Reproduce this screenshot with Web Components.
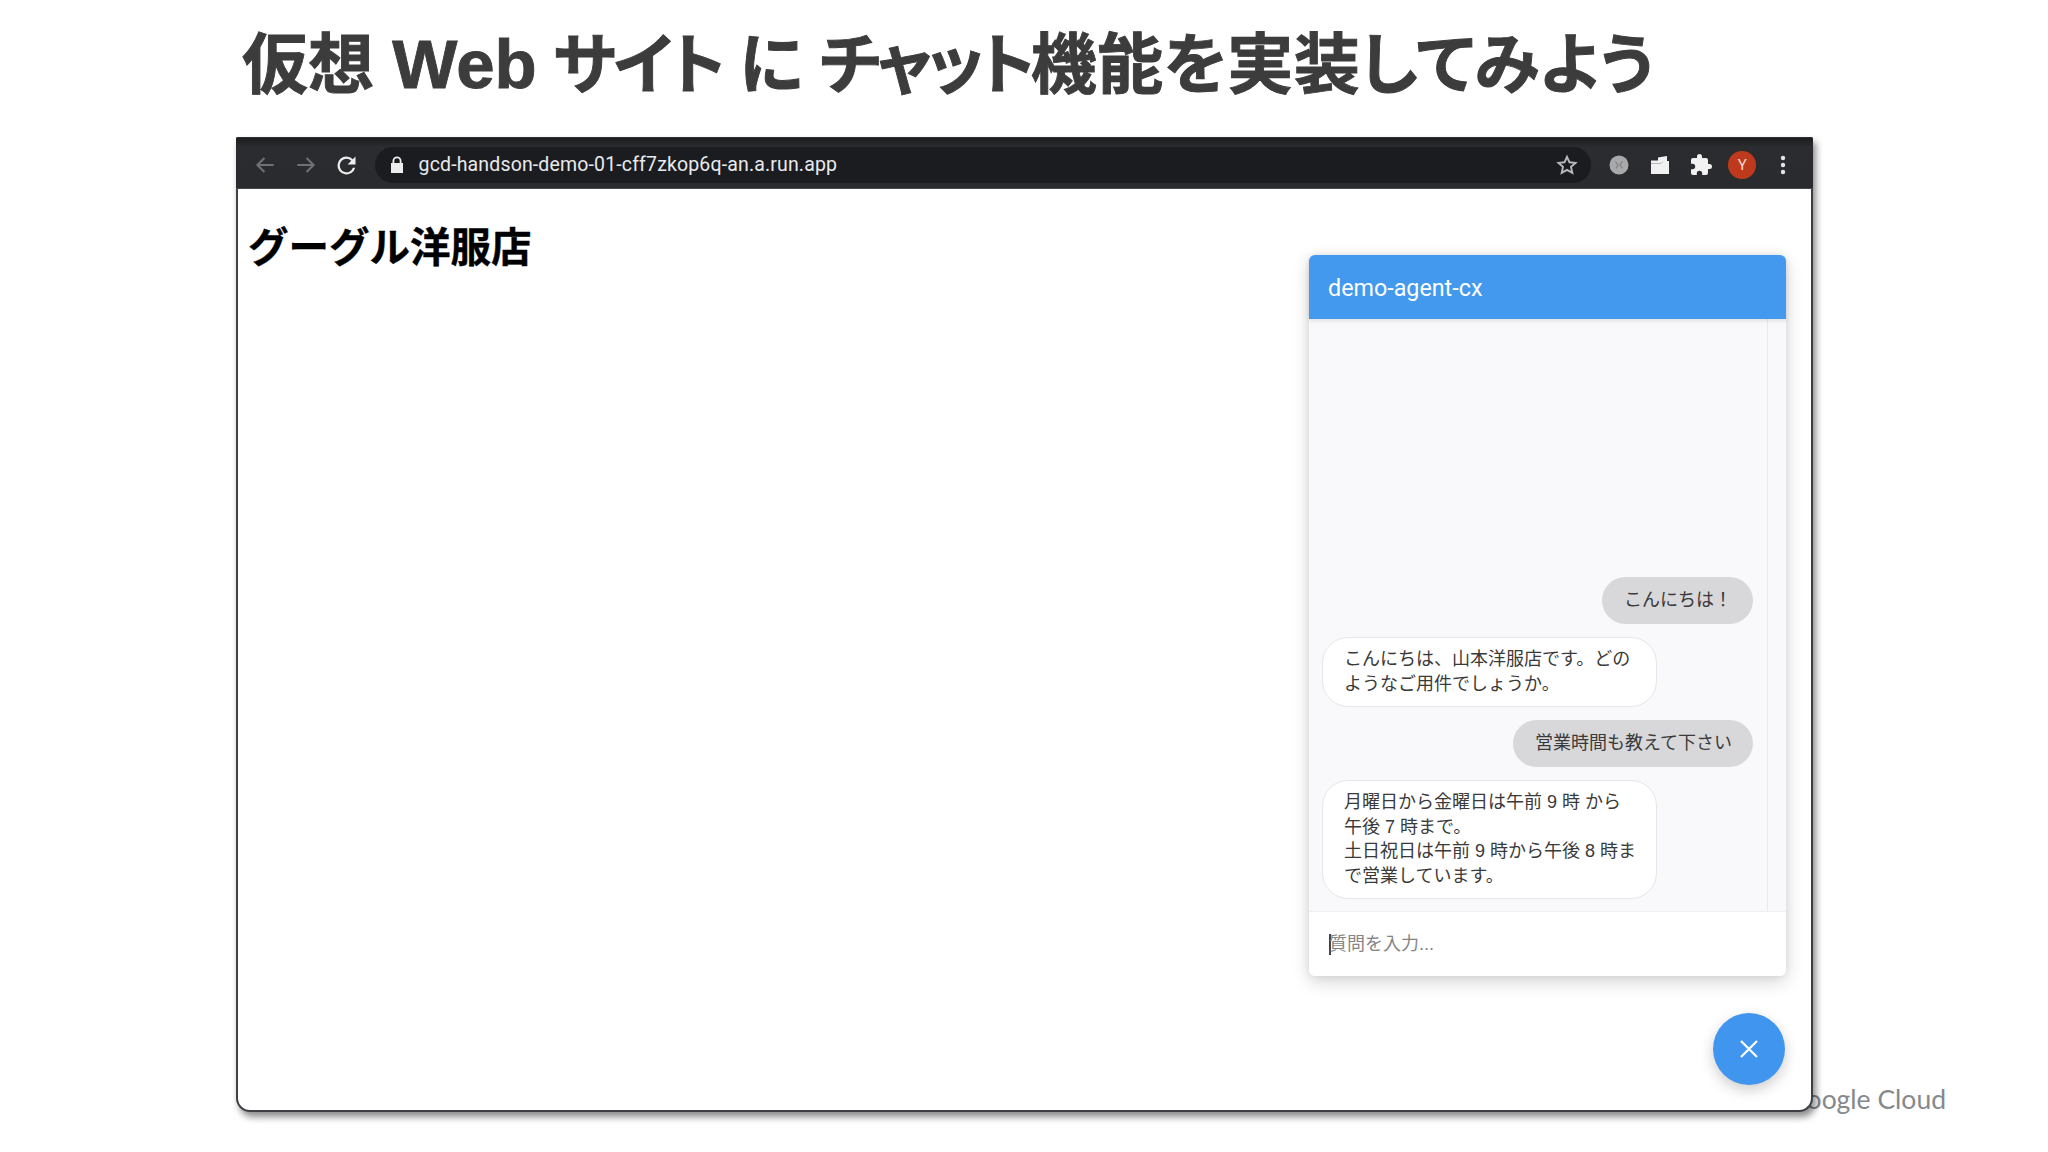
<!DOCTYPE html>
<html lang="ja">
<head>
<meta charset="utf-8">
<title>仮想 Web サイトにチャット機能を実装してみよう</title>
<style>
    html, body { margin: 0; background: #fff; }
    body { font-family: "Liberation Sans", "Noto Sans CJK JP", sans-serif; }
    .web { font-size: 69px; margin-left: 2px; }
    .tight { letter-spacing: -2.6px; }
    .tighter { letter-spacing: -4.2px; }
    .rest { letter-spacing: .4px; }
</style>
</head>
<body>
<slide-page>
    <span slot="title">仮想 <span class="web">Web</span> <span class="tight">サイト</span> に <span class="tighter">チャット</span><span class="rest">機能を実装してみよう</span></span>
    <browser-window url="gcd-handson-demo-01-cff7zkop6q-an.a.run.app">
        <h1 style="margin:0;font:700 40.5px/48px 'Liberation Sans','Noto Sans CJK JP',sans-serif;color:#000;-webkit-text-stroke:.4px #000;">グーグル洋服店</h1>
        <chat-widget slot="overlay" heading="demo-agent-cx" placeholder="質問を入力...">
            <chat-bubble from="user">こんにちは！</chat-bubble>
            <chat-bubble from="bot">こんにちは、山本洋服店です。どのようなご用件でしょうか。</chat-bubble>
            <chat-bubble from="user">営業時間も教えて下さい</chat-bubble>
            <chat-bubble from="bot">月曜日から金曜日は午前 9 時 から<br>午後 7 時まで。<br>土日祝日は午前 9 時から午後 8 時まで営業しています。</chat-bubble>
        </chat-widget>
        <fab-button slot="overlay"></fab-button>
    </browser-window>
</slide-page>

<script>
class SlidePage extends HTMLElement {
    constructor() {
        super();
        this.attachShadow({ mode: 'open' }).innerHTML = `
            <style>
                :host { display: block; position: relative; width: 2048px; height: 1152px; overflow: hidden; background: #fff; }
                .title {
                    height: 124px;
                    padding: 3px 0 10px 242px;
                    font: 700 66px/124px "Liberation Sans", "Noto Sans CJK JP", sans-serif;
                    font-feature-settings: "palt";
                    -webkit-text-stroke: .9px #3c3c3c;
                    word-spacing: -2px;
                    color: #3c3c3c;
                    white-space: nowrap;
                }
                .logo {
                    position: absolute;
                    right: 102px;
                    top: 1082px;
                    font: 400 26.500px/34px Lato, sans-serif;
                    color: #85898d;
                }
                .main { position: relative; padding-left: 236px; }
            </style>
            <div class="title"><slot name="title"></slot></div>
            <div class="logo">Google Cloud</div>
            <div class="main"><slot></slot></div>
        `;
    }
}

class BrowserWindow extends HTMLElement {
    constructor() {
        super();
        const url = this.getAttribute('url');
        this.attachShadow({ mode: 'open' }).innerHTML = `
            <style>
                :host {
                    display: block;
                    position: relative;
                    box-sizing: border-box;
                    width: 1577px;
                    height: 975px;
                    background: #fff;
                    border: solid #3f4043;
                    border-width: 0 2px 2px 2px;
                    border-radius: 2px 2px 14px 14px;
                    box-shadow: 3px 5px 7px rgba(0,0,0,.45);
                }
                .page { padding: 35px 10px; }
            </style>
            <browser-toolbar url="${url}"></browser-toolbar>
            <div class="page"><slot></slot></div>
            <slot name="overlay"></slot>
        `;
    }
}

class BrowserToolbar extends HTMLElement {
    constructor() {
        super();
        const url = this.getAttribute('url');
        this.attachShadow({ mode: 'open' }).innerHTML = `
            <style>
                :host {
                    display: flex;
                    align-items: center;
                    height: 52px;
                    margin: 0 -2px;
                    padding: 4px 9px 0 8px;
                    box-sizing: border-box;
                    background: linear-gradient(#1c1d1f 0, #2b2c2f 9px, #2a2b2e 100%);
                    border-top: 1px solid #2d2e30;
                    border-bottom: 1px solid #46474a;
                    border-radius: 2px 2px 0 0;
                }
                .btn { flex: 0 0 41.2px; height: 32px; display: flex; align-items: center; justify-content: center; }
                .omni {
                    flex: 1;
                    height: 36px;
                    margin: 0 7px 0 7px;
                    padding: 0 12px 0 13px;
                    box-sizing: border-box;
                    display: flex;
                    align-items: center;
                    background: #1b1c1f;
                    border-radius: 18px;
                    color: #e8eaed;
                    font: 400 19.500px/36px Roboto, sans-serif;
                    letter-spacing: .15px;
                }
                .omni .url { margin-left: 13px; flex: 1; }
                svg { display: block; }
                .avatar {
                    width: 28px; height: 28px; border-radius: 50%; background: #bf3a1d; color: #f4d8d0;
                    font: 400 15px/28px Roboto, sans-serif; text-align: center;
                }
            </style>
            <div class="btn"><svg width="26" height="26" viewBox="0 0 24 24" fill="none" stroke="#6f7073" stroke-width="2"><path d="M20 12H5M11.5 5.5 5 12l6.5 6.5"/></svg></div>
            <div class="btn"><svg width="26" height="26" viewBox="0 0 24 24" fill="none" stroke="#6f7073" stroke-width="2"><path d="M4 12h15M12.500 5.500 19 12l-6.500 6.500"/></svg></div>
            <div class="btn"><svg width="27" height="27" viewBox="0 0 24 24" fill="#eceded"><path d="M17.650 6.350A7.960 7.960 0 0 0 12 4a8 8 0 1 0 7.730 10h-2.080A6 6 0 1 1 12 6c1.660 0 3.140.69 4.220 1.780L13 11h7V4z"/></svg></div>
            <div class="omni">
                <svg width="18" height="20" viewBox="0 0 18 20" fill="#eceded"><path d="M4.500 8V6a4.500 4.500 0 0 1 9 0v2H15v10H3V8zM6.300 8h5.400V6a2.700 2.700 0 0 0-5.400 0z"/></svg>
                <span class="url">${url}</span>
                <svg width="24" height="24" viewBox="0 0 24 24" fill="none" stroke="#b9babc" stroke-width="1.900"><path d="m12 3.800 2.500 5.500 6 .6-4.500 4 1.300 5.900L12 16.800l-5.300 3 1.300-5.900-4.500-4 6-.6z"/></svg>
            </div>
            <div class="btn"><svg width="20" height="20" viewBox="0 0 20 20"><circle cx="10" cy="10" r="9.500" fill="#a9a9ab"/><path d="M6.500 6.500 9 10l-2 3.500M13.500 6 11 10l2.500 3.500" stroke="#808183" stroke-width="1.200" fill="none"/></svg></div>
            <div class="btn"><svg width="20" height="20" viewBox="0 0 20 20" fill="#f1f1f2"><path d="M1 5.500h7V2.500l9-1.500V6h2v13H1z"/><path d="M1 8.500h10l2-2" fill="none" stroke="#a9aaac" stroke-width=".8"/></svg></div>
            <div class="btn"><svg width="24" height="24" viewBox="0 0 24 24" fill="#f1f1f2"><path d="M20.500 11H19V7a2 2 0 0 0-2-2h-4V3.500a2.500 2.500 0 0 0-5 0V5H4a2 2 0 0 0-2 2v3.800h1.500a2.700 2.700 0 0 1 0 5.400H2V20a2 2 0 0 0 2 2h3.800v-1.500a2.700 2.700 0 0 1 5.400 0V22H17a2 2 0 0 0 2-2v-4h1.500a2.500 2.500 0 0 0 0-5z"/></svg></div>
            <div class="btn"><div class="avatar">Y</div></div>
            <div class="btn"><svg width="6" height="22" viewBox="0 0 6 22" fill="#e4e4e5"><circle cx="3" cy="4" r="2.200"/><circle cx="3" cy="11" r="2.200"/><circle cx="3" cy="18" r="2.200"/></svg></div>
        `;
    }
}

class ChatWidget extends HTMLElement {
    constructor() {
        super();
        this.attachShadow({ mode: 'open' }).innerHTML = `
            <style>
                :host {
                    display: flex;
                    flex-direction: column;
                    position: absolute;
                    left: 1071px;
                    top: 118px;
                    width: 477px;
                    height: 721px;
                    background: #f9f9fb;
                    border-radius: 6px;
                    box-shadow: 0 6px 18px rgba(0,0,0,.16), 0 0 8px rgba(0,0,0,.08);
                }
                header {
                    height: 64px;
                    flex: none;
                    padding-left: 19px;
                    background: #4299ee;
                    border-radius: 6px 6px 0 0;
                    color: #fff;
                    font: 400 23.300px/66px Roboto, sans-serif;
                    box-shadow: 0 2px 4px rgba(0,0,0,.1);
                    position: relative;
                }
                .body { flex: 1; display: flex; min-height: 0; }
                .messages {
                    flex: 1;
                    display: flex;
                    flex-direction: column;
                    justify-content: flex-end;
                    gap: 12.500px;
                    padding: 0 14px 12px 13px;
                }
                .track { flex: 0 0 18px; border-left: 1px solid #e9e9ec; }
                .input {
                    flex: none;
                    height: 65px;
                    background: #fff;
                    border-top: 1px solid #f0f0f2;
                    box-sizing: border-box;
                    border-radius: 0 0 6px 6px;
                    padding-left: 20px;
                    display: flex;
                    align-items: center;
                    font: 400 18px/24px "Liberation Sans", "Noto Sans CJK JP", sans-serif;
                    color: #858585;
                }
                .caret { width: 1.500px; height: 21px; background: #444; margin-right: -1.500px; }
            </style>
            <header>${this.getAttribute('heading')}</header>
            <div class="body">
                <div class="messages"><slot></slot></div>
                <div class="track"></div>
            </div>
            <div class="input"><span class="caret"></span><span>${this.getAttribute('placeholder')}</span></div>
        `;
    }
}

class ChatBubble extends HTMLElement {
    constructor() {
        super();
        this.attachShadow({ mode: 'open' }).innerHTML = `
            <style>
                :host {
                    display: block;
                    box-sizing: border-box;
                    font: 400 18px/24.600px "Liberation Sans", "Noto Sans CJK JP", sans-serif;
                    color: #3a3a3a;
                }
                :host([from="user"]) {
                    align-self: flex-end;
                    padding: 11.500px 21px 11.500px 22px;
                    background: #d8d8da;
                    border-radius: 24px;
                }
                :host([from="bot"]) {
                    align-self: flex-start;
                    width: 335px;
                    padding: 9.500px 15px 9.500px 21px;
                    background: #fff;
                    border: 1px solid #e6e6e8;
                    border-radius: 26px;
                }
            </style>
            <slot></slot>
        `;
    }
}

class FabButton extends HTMLElement {
    constructor() {
        super();
        this.attachShadow({ mode: 'open' }).innerHTML = `
            <style>
                :host {
                    display: flex;
                    align-items: center;
                    justify-content: center;
                    position: absolute;
                    left: 1475px;
                    top: 876px;
                    width: 72px;
                    height: 72px;
                    border-radius: 50%;
                    background: #4096ee;
                    box-shadow: 0 5px 14px rgba(0,0,0,.2);
                }
            </style>
            <svg width="20" height="20" viewBox="0 0 20 20" stroke="#fff" stroke-width="2.200"><path d="M2 2l16 16M18 2 2 18"/></svg>
        `;
    }
}

customElements.define('slide-page', SlidePage);
customElements.define('browser-toolbar', BrowserToolbar);
customElements.define('browser-window', BrowserWindow);
customElements.define('chat-widget', ChatWidget);
customElements.define('chat-bubble', ChatBubble);
customElements.define('fab-button', FabButton);
</script>
</body>
</html>
